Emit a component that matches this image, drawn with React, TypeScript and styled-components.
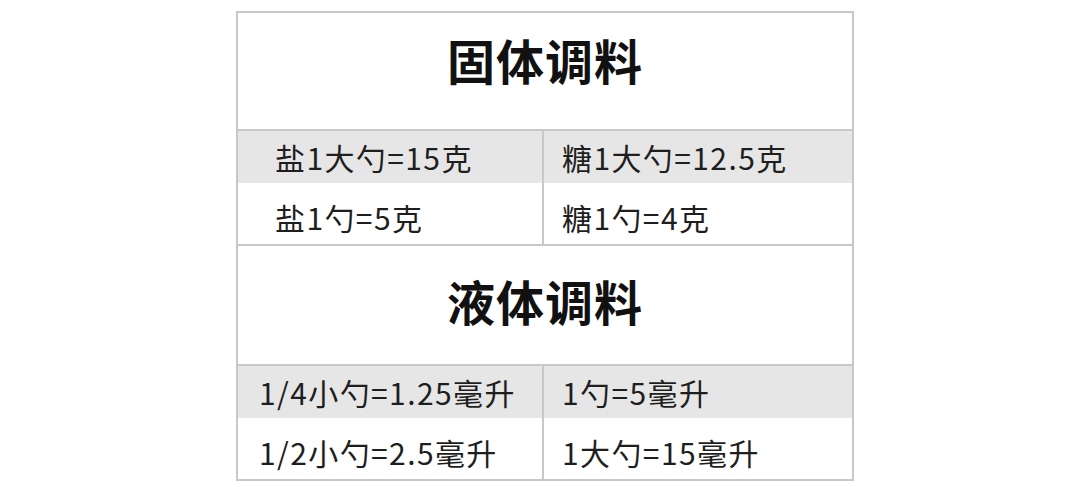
import React from "react";
import styled, { createGlobalStyle } from "styled-components";

const Global = createGlobalStyle`
  html, body { margin: 0; padding: 0; background: #ffffff; }
  body { font-family: "Noto Sans CJK SC", "Noto Sans", sans-serif; color: #1e1e1e; }
`;

const Page = styled.div`
  width: 1080px;
  height: 487px;
  padding-top: 11px;
  padding-left: 236px;
  box-sizing: border-box;
`;

const Table = styled.div`
  width: 618px;
  border: 2px solid #c8c8c8;
  box-sizing: border-box;
  display: flex;
  flex-direction: column;
`;

const Title = styled.div<{ $h: number; $lift: number }>`
  height: ${(p) => p.$h}px;
  display: flex;
  align-items: center;
  justify-content: center;
  padding-bottom: ${(p) => p.$lift}px;
  box-sizing: border-box;
  border-bottom: 2px solid #c8c8c8;
  font-size: 48px;
  font-weight: 700;
  letter-spacing: 1px;
  line-height: 1;
  color: #111111;
`;

const Row = styled.div<{ $shade?: boolean; $h: number; $last?: boolean }>`
  display: grid;
  grid-template-columns: 306px 1fr;
  height: ${(p) => p.$h + (p.$last ? 0 : 2)}px;
  background: ${(p) => (p.$shade ? "#e6e6e6" : "#ffffff")};
  border-bottom: ${(p) => (p.$last ? "none" : "2px solid #c8c8c8")};
  box-sizing: border-box;
`;

const Cell = styled.div<{ $indent: number; $first?: boolean; $drop: number }>`
  display: flex;
  align-items: center;
  padding-left: ${(p) => p.$indent}px;
  padding-top: ${(p) => p.$drop}px;
  box-sizing: border-box;
  border-right: ${(p) => (p.$first ? "2px solid #c8c8c8" : "none")};
  font-size: 30px;
  letter-spacing: 1.4px;
  line-height: 1;
  color: #1e1e1e;
  white-space: nowrap;
`;

type Section = {
  title: string;
  titleH: number;
  lift: number;
  leftIndent: number;
  rows: [string, string][];
};

const sections: Section[] = [
  {
    title: "固体调料",
    titleH: 118,
    lift: 24,
    leftIndent: 37,
    rows: [
      ["盐1大勺=15克", "糖1大勺=12.5克"],
      ["盐1勺=5克", "糖1勺=4克"],
    ],
  },
  {
    title: "液体调料",
    titleH: 120,
    lift: 10,
    leftIndent: 21,
    rows: [
      ["1/4小勺=1.25毫升", "1勺=5毫升"],
      ["1/2小勺=2.5毫升", "1大勺=15毫升"],
    ],
  },
];

export default function App() {
  return (
    <>
      <Global />
      <Page>
        <Table>
          {sections.map((s, si) => (
            <React.Fragment key={s.title}>
              <Title $h={s.titleH} $lift={s.lift}>
                {s.title}
              </Title>
              {s.rows.map((r, ri) => {
                const shade = ri === 0;
                const last = si === sections.length - 1 && ri === s.rows.length - 1;
                return (
                  <Row key={ri} $shade={shade} $h={shade ? 52 : 61} $last={last || shade}>
                    <Cell $first $indent={s.leftIndent} $drop={shade ? 0 : 7}>
                      {r[0]}
                    </Cell>
                    <Cell $indent={18} $drop={shade ? 0 : 7}>
                      {r[1]}
                    </Cell>
                  </Row>
                );
              })}
            </React.Fragment>
          ))}
        </Table>
      </Page>
    </>
  );
}
